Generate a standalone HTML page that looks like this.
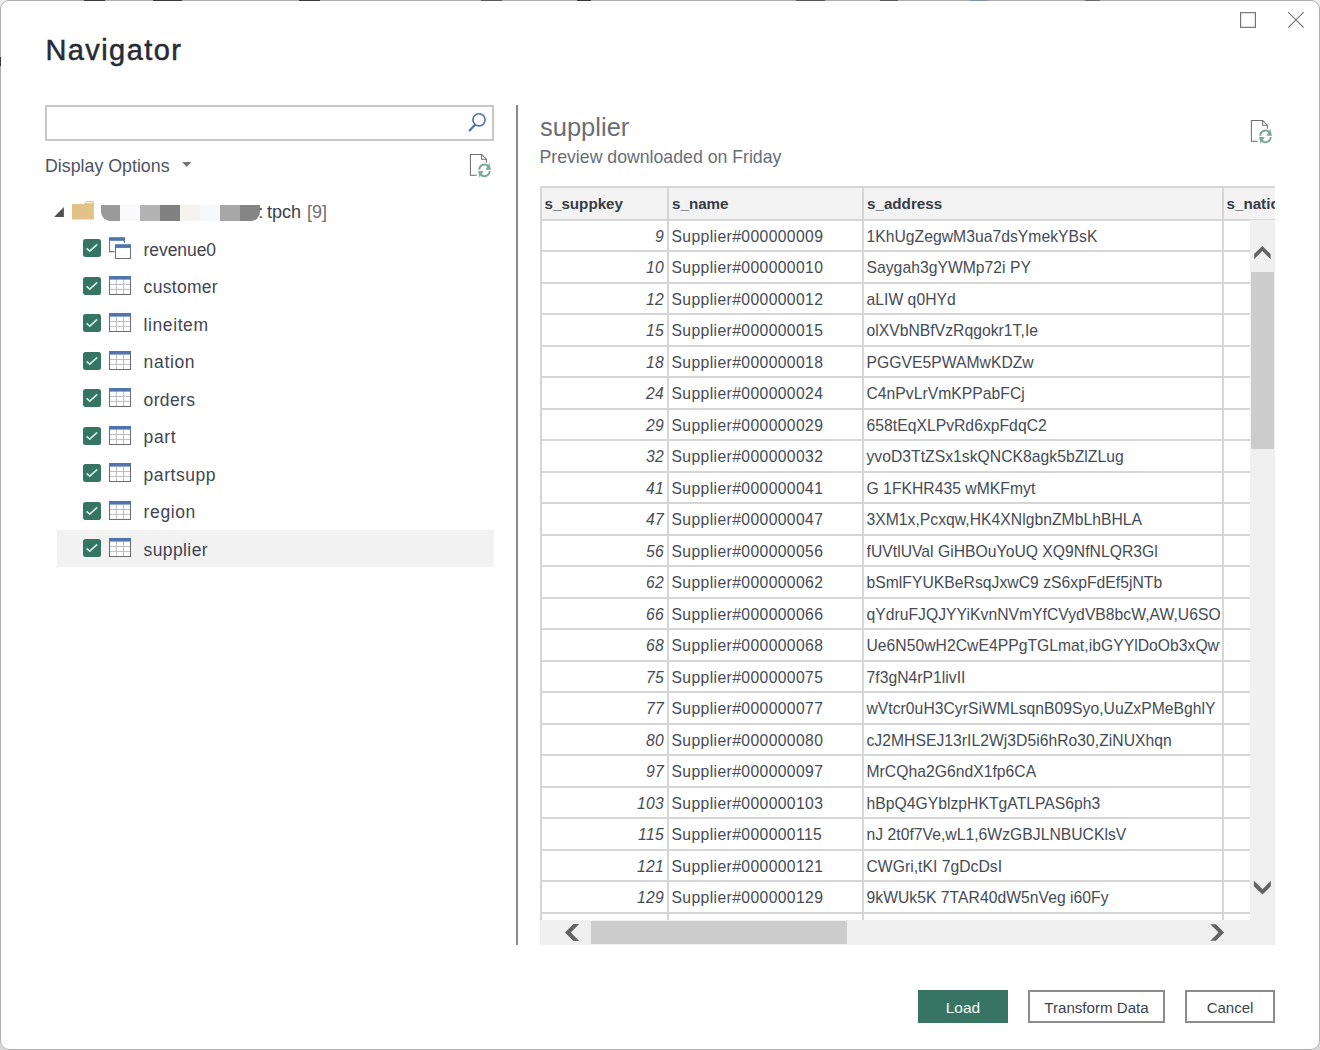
<!DOCTYPE html>
<html><head><meta charset="utf-8"><title>Navigator</title><style>
html,body{margin:0;padding:0;width:1320px;height:1050px;overflow:hidden;background:linear-gradient(#f0f0f0,#dadada);}
body{position:relative;font-family:"Liberation Sans",sans-serif;}
#dlg{position:absolute;left:0;top:0;width:1320px;height:1050px;border-radius:9px;background:#fff;overflow:hidden;}
#frame{position:absolute;left:0;top:0;width:1318px;height:1048px;border:1px solid #adadad;border-radius:9px;pointer-events:none;}
.t{position:absolute;line-height:40px;height:40px;white-space:nowrap;font-family:"Liberation Sans",sans-serif;}
.r{position:absolute;}
.s{position:absolute;left:0;top:0;overflow:visible;}
</style></head><body><div id="dlg">

<svg class="s" width="1320" height="1050" viewBox="0 0 1320 1050"><rect x="1240.6" y="12.6" width="14.8" height="14.8" fill="none" stroke="#767676" stroke-width="1.2"/><path d="M1288.2 12.2 L1303.7 27.7 M1303.7 12.2 L1288.2 27.7" stroke="#767676" stroke-width="1.2" fill="none"/></svg>
<div class="t" style="left:45.50px;top:29.65px;font-size:29px;color:#262b35;font-weight:normal;font-style:normal;-webkit-text-stroke:0.5px #262b35;letter-spacing:1.4px;">Navigator</div>
<div class="r" style="left:45px;top:105px;width:449px;height:36px;background:transparent;border:2px solid #c8c8c8;box-sizing:border-box;"></div>
<svg class="s" width="1320" height="1050" viewBox="0 0 1320 1050"><circle cx="479" cy="119.8" r="6.1" fill="none" stroke="#4f72aa" stroke-width="1.65"/><path d="M474.6 125.2 L469.6 130.4" stroke="#4f72aa" stroke-width="2.2" stroke-linecap="round"/></svg>
<div class="t" style="left:45.00px;top:145.53px;font-size:17.8px;color:#4d5460;font-weight:normal;font-style:normal;">Display Options</div>
<svg class="s" width="1320" height="1050" viewBox="0 0 1320 1050"><path d="M182.2 162 L191.2 162 L186.7 167 Z" fill="#727272"/></svg>
<svg class="s" width="1320" height="1050" viewBox="0 0 1320 1050"><g transform="translate(470.4,154.4)"><path d="M0 20.9 L0 0 L11.2 0 L16 4.8 L16 8.3" fill="none" stroke="#707070" stroke-width="1.05"/><path d="M11.2 0 L11.2 4.9 L16 4.9" fill="none" stroke="#707070" stroke-width="1.05"/><path d="M-0.5 20.9 L6.3 20.9" fill="none" stroke="#707070" stroke-width="1.05"/><path d="M8.9 15.3 A5.2 5.2 0 0 1 18.6 12.8" fill="none" stroke="#7aab98" stroke-width="2"/><path d="M15.0 15.3 L20.5 15.3 L19.0 8.7 Z" fill="#7aab98"/><path d="M19.3 16.7 A5.2 5.2 0 0 1 9.6 19.2" fill="none" stroke="#7aab98" stroke-width="2"/><path d="M13.2 16.7 L7.7 16.7 L9.2 23.3 Z" fill="#7aab98"/></g></svg>
<svg class="s" width="1320" height="1050" viewBox="0 0 1320 1050"><g transform="translate(1251.4,120.4)"><path d="M0 20.9 L0 0 L11.2 0 L16 4.8 L16 8.3" fill="none" stroke="#707070" stroke-width="1.05"/><path d="M11.2 0 L11.2 4.9 L16 4.9" fill="none" stroke="#707070" stroke-width="1.05"/><path d="M-0.5 20.9 L6.3 20.9" fill="none" stroke="#707070" stroke-width="1.05"/><path d="M8.9 15.3 A5.2 5.2 0 0 1 18.6 12.8" fill="none" stroke="#7aab98" stroke-width="2"/><path d="M15.0 15.3 L20.5 15.3 L19.0 8.7 Z" fill="#7aab98"/><path d="M19.3 16.7 A5.2 5.2 0 0 1 9.6 19.2" fill="none" stroke="#7aab98" stroke-width="2"/><path d="M13.2 16.7 L7.7 16.7 L9.2 23.3 Z" fill="#7aab98"/></g></svg>
<svg class="s" width="1320" height="1050" viewBox="0 0 1320 1050"><path d="M54.1 216.9 L63.9 207.1 L63.9 216.9 Z" fill="#505050"/><path d="M72 204 L72 219.6 L93.9 219.6 L93.9 201.2 L86.4 201.2 L84.1 204 Z" fill="#e2c286"/><path d="M84.6 203.8 L86.6 201.7 L93.4 201.7 L93.4 203.8 Z" fill="#fbf3df" stroke="#e2c286" stroke-width="0.9"/></svg>
<div class="t" style="left:258.30px;top:191.96px;font-size:18px;color:#3a3f48;font-weight:normal;font-style:normal;">:</div>
<div class="r" style="left:100.5px;top:205px;width:19.5px;height:16px;background:#9a9a9a;border-radius:0 0 0 9px;"></div>
<div class="r" style="left:120px;top:205px;width:20px;height:16px;background:#f8fafb;"></div>
<div class="r" style="left:140px;top:205px;width:20px;height:16px;background:#b3b3b3;"></div>
<div class="r" style="left:160px;top:205px;width:20px;height:16px;background:#808080;"></div>
<div class="r" style="left:180px;top:205px;width:20px;height:16px;background:#f6f3ee;"></div>
<div class="r" style="left:200px;top:205px;width:20px;height:16px;background:#f5f9fb;"></div>
<div class="r" style="left:220px;top:205px;width:20px;height:16px;background:#a7a7a7;"></div>
<div class="r" style="left:240px;top:205px;width:19.8px;height:16px;background:#858585;border-radius:0 0 9px 0;"></div>
<div class="t" style="left:267.00px;top:191.96px;font-size:18px;color:#3a3f48;font-weight:normal;font-style:normal;">tpch</div>
<div class="t" style="left:307.00px;top:191.96px;font-size:18px;color:#707070;font-weight:normal;font-style:normal;">[9]</div>
<div class="r" style="left:57px;top:530px;width:437px;height:37px;background:#f2f2f2;"></div>
<div class="r" style="left:83px;top:239px;width:18px;height:18px;background:#377563;border-radius:2.5px;"></div>
<svg class="s" width="1320" height="1050" viewBox="0 0 1320 1050"><path d="M86.6 248.4 L89.8 251.2 L97.2 244.3" fill="none" stroke="#cdeee2" stroke-width="1.6"/><path d="M109.5 240.5 V251.6 H114.5 M124.5 240 V243" fill="none" stroke="#707070" stroke-width="1.05"/><rect x="109" y="237.2" width="16" height="3.6" fill="#4f74ae"/><rect x="115.5" y="247" width="15" height="11.5" fill="#fff" stroke="#707070" stroke-width="1.05"/><rect x="115" y="244.2" width="16" height="3.6" fill="#4f74ae"/></svg>
<div class="t" style="left:143.60px;top:229.83px;font-size:17.5px;color:#3f4551;font-weight:normal;font-style:normal;letter-spacing:-0.07px;">revenue0</div>
<div class="r" style="left:83px;top:277px;width:18px;height:18px;background:#377563;border-radius:2.5px;"></div>
<svg class="s" width="1320" height="1050" viewBox="0 0 1320 1050"><path d="M86.6 286.4 L89.8 289.2 L97.2 282.3" fill="none" stroke="#cdeee2" stroke-width="1.6"/><g transform="translate(0,276)"><rect x="109.5" y="0.5" width="21" height="18" fill="#fff" stroke="#6e6e6e" stroke-width="1.05"/><path d="M116.4 3.6 V18 M123.5 3.6 V18 M110 8.5 H130 M110 13.4 H130" stroke="#bdbdbd" stroke-width="1"/><rect x="109" y="0" width="22" height="3.6" fill="#4f74ae"/></g></svg>
<div class="t" style="left:143.60px;top:267.33px;font-size:17.5px;color:#3f4551;font-weight:normal;font-style:normal;letter-spacing:0.3px;">customer</div>
<div class="r" style="left:83px;top:314px;width:18px;height:18px;background:#377563;border-radius:2.5px;"></div>
<svg class="s" width="1320" height="1050" viewBox="0 0 1320 1050"><path d="M86.6 323.4 L89.8 326.2 L97.2 319.3" fill="none" stroke="#cdeee2" stroke-width="1.6"/><g transform="translate(0,313)"><rect x="109.5" y="0.5" width="21" height="18" fill="#fff" stroke="#6e6e6e" stroke-width="1.05"/><path d="M116.4 3.6 V18 M123.5 3.6 V18 M110 8.5 H130 M110 13.4 H130" stroke="#bdbdbd" stroke-width="1"/><rect x="109" y="0" width="22" height="3.6" fill="#4f74ae"/></g></svg>
<div class="t" style="left:143.60px;top:304.83px;font-size:17.5px;color:#3f4551;font-weight:normal;font-style:normal;letter-spacing:0.586px;">lineitem</div>
<div class="r" style="left:83px;top:352px;width:18px;height:18px;background:#377563;border-radius:2.5px;"></div>
<svg class="s" width="1320" height="1050" viewBox="0 0 1320 1050"><path d="M86.6 361.4 L89.8 364.2 L97.2 357.3" fill="none" stroke="#cdeee2" stroke-width="1.6"/><g transform="translate(0,351)"><rect x="109.5" y="0.5" width="21" height="18" fill="#fff" stroke="#6e6e6e" stroke-width="1.05"/><path d="M116.4 3.6 V18 M123.5 3.6 V18 M110 8.5 H130 M110 13.4 H130" stroke="#bdbdbd" stroke-width="1"/><rect x="109" y="0" width="22" height="3.6" fill="#4f74ae"/></g></svg>
<div class="t" style="left:143.60px;top:342.33px;font-size:17.5px;color:#3f4551;font-weight:normal;font-style:normal;letter-spacing:0.66px;">nation</div>
<div class="r" style="left:83px;top:389px;width:18px;height:18px;background:#377563;border-radius:2.5px;"></div>
<svg class="s" width="1320" height="1050" viewBox="0 0 1320 1050"><path d="M86.6 398.4 L89.8 401.2 L97.2 394.3" fill="none" stroke="#cdeee2" stroke-width="1.6"/><g transform="translate(0,388)"><rect x="109.5" y="0.5" width="21" height="18" fill="#fff" stroke="#6e6e6e" stroke-width="1.05"/><path d="M116.4 3.6 V18 M123.5 3.6 V18 M110 8.5 H130 M110 13.4 H130" stroke="#bdbdbd" stroke-width="1"/><rect x="109" y="0" width="22" height="3.6" fill="#4f74ae"/></g></svg>
<div class="t" style="left:143.60px;top:379.83px;font-size:17.5px;color:#3f4551;font-weight:normal;font-style:normal;letter-spacing:0.36px;">orders</div>
<div class="r" style="left:83px;top:427px;width:18px;height:18px;background:#377563;border-radius:2.5px;"></div>
<svg class="s" width="1320" height="1050" viewBox="0 0 1320 1050"><path d="M86.6 436.4 L89.8 439.2 L97.2 432.3" fill="none" stroke="#cdeee2" stroke-width="1.6"/><g transform="translate(0,426)"><rect x="109.5" y="0.5" width="21" height="18" fill="#fff" stroke="#6e6e6e" stroke-width="1.05"/><path d="M116.4 3.6 V18 M123.5 3.6 V18 M110 8.5 H130 M110 13.4 H130" stroke="#bdbdbd" stroke-width="1"/><rect x="109" y="0" width="22" height="3.6" fill="#4f74ae"/></g></svg>
<div class="t" style="left:143.60px;top:417.33px;font-size:17.5px;color:#3f4551;font-weight:normal;font-style:normal;letter-spacing:0.6px;">part</div>
<div class="r" style="left:83px;top:464px;width:18px;height:18px;background:#377563;border-radius:2.5px;"></div>
<svg class="s" width="1320" height="1050" viewBox="0 0 1320 1050"><path d="M86.6 473.4 L89.8 476.2 L97.2 469.3" fill="none" stroke="#cdeee2" stroke-width="1.6"/><g transform="translate(0,463)"><rect x="109.5" y="0.5" width="21" height="18" fill="#fff" stroke="#6e6e6e" stroke-width="1.05"/><path d="M116.4 3.6 V18 M123.5 3.6 V18 M110 8.5 H130 M110 13.4 H130" stroke="#bdbdbd" stroke-width="1"/><rect x="109" y="0" width="22" height="3.6" fill="#4f74ae"/></g></svg>
<div class="t" style="left:143.60px;top:454.83px;font-size:17.5px;color:#3f4551;font-weight:normal;font-style:normal;letter-spacing:0.543px;">partsupp</div>
<div class="r" style="left:83px;top:502px;width:18px;height:18px;background:#377563;border-radius:2.5px;"></div>
<svg class="s" width="1320" height="1050" viewBox="0 0 1320 1050"><path d="M86.6 511.4 L89.8 514.2 L97.2 507.3" fill="none" stroke="#cdeee2" stroke-width="1.6"/><g transform="translate(0,501)"><rect x="109.5" y="0.5" width="21" height="18" fill="#fff" stroke="#6e6e6e" stroke-width="1.05"/><path d="M116.4 3.6 V18 M123.5 3.6 V18 M110 8.5 H130 M110 13.4 H130" stroke="#bdbdbd" stroke-width="1"/><rect x="109" y="0" width="22" height="3.6" fill="#4f74ae"/></g></svg>
<div class="t" style="left:143.60px;top:492.33px;font-size:17.5px;color:#3f4551;font-weight:normal;font-style:normal;letter-spacing:0.62px;">region</div>
<div class="r" style="left:83px;top:539px;width:18px;height:18px;background:#377563;border-radius:2.5px;"></div>
<svg class="s" width="1320" height="1050" viewBox="0 0 1320 1050"><path d="M86.6 548.4 L89.8 551.2 L97.2 544.3" fill="none" stroke="#cdeee2" stroke-width="1.6"/><g transform="translate(0,538)"><rect x="109.5" y="0.5" width="21" height="18" fill="#fff" stroke="#6e6e6e" stroke-width="1.05"/><path d="M116.4 3.6 V18 M123.5 3.6 V18 M110 8.5 H130 M110 13.4 H130" stroke="#bdbdbd" stroke-width="1"/><rect x="109" y="0" width="22" height="3.6" fill="#4f74ae"/></g></svg>
<div class="t" style="left:143.60px;top:529.83px;font-size:17.5px;color:#3f4551;font-weight:normal;font-style:normal;letter-spacing:0.386px;">supplier</div>
<div class="r" style="left:516px;top:105px;width:2px;height:840px;background:#8a8a8a;"></div>
<div class="t" style="left:540.00px;top:107.06px;font-size:25.5px;color:#6a6d74;font-weight:normal;font-style:normal;">supplier</div>
<div class="t" style="left:539.50px;top:136.96px;font-size:17.7px;color:#686e78;font-weight:normal;font-style:normal;">Preview downloaded on Friday</div>
<div class="r" style="left:540px;top:186px;width:735px;height:734px;overflow:hidden;">
<div class="r" style="left:0px;top:0px;width:735px;height:33px;background:#f3f3f3;"></div>
<div class="r" style="left:0px;top:0px;width:735px;height:2px;background:#d6d6d6;"></div>
<div class="r" style="left:0px;top:0px;width:2px;height:734px;background:#d6d6d6;"></div>
<div class="r" style="left:127px;top:0px;width:2px;height:734px;background:#d6d6d6;"></div>
<div class="r" style="left:322px;top:0px;width:2px;height:734px;background:#d6d6d6;"></div>
<div class="r" style="left:682px;top:0px;width:2px;height:734px;background:#d6d6d6;"></div>
<div class="r" style="left:0px;top:33px;width:735px;height:2px;background:#d6d6d6;"></div>
<div class="r" style="left:0px;top:64px;width:735px;height:2px;background:#d6d6d6;"></div>
<div class="r" style="left:0px;top:96px;width:735px;height:2px;background:#d6d6d6;"></div>
<div class="r" style="left:0px;top:127px;width:735px;height:2px;background:#d6d6d6;"></div>
<div class="r" style="left:0px;top:159px;width:735px;height:2px;background:#d6d6d6;"></div>
<div class="r" style="left:0px;top:190px;width:735px;height:2px;background:#d6d6d6;"></div>
<div class="r" style="left:0px;top:222px;width:735px;height:2px;background:#d6d6d6;"></div>
<div class="r" style="left:0px;top:253px;width:735px;height:2px;background:#d6d6d6;"></div>
<div class="r" style="left:0px;top:285px;width:735px;height:2px;background:#d6d6d6;"></div>
<div class="r" style="left:0px;top:316px;width:735px;height:2px;background:#d6d6d6;"></div>
<div class="r" style="left:0px;top:348px;width:735px;height:2px;background:#d6d6d6;"></div>
<div class="r" style="left:0px;top:379px;width:735px;height:2px;background:#d6d6d6;"></div>
<div class="r" style="left:0px;top:411px;width:735px;height:2px;background:#d6d6d6;"></div>
<div class="r" style="left:0px;top:442px;width:735px;height:2px;background:#d6d6d6;"></div>
<div class="r" style="left:0px;top:474px;width:735px;height:2px;background:#d6d6d6;"></div>
<div class="r" style="left:0px;top:505px;width:735px;height:2px;background:#d6d6d6;"></div>
<div class="r" style="left:0px;top:537px;width:735px;height:2px;background:#d6d6d6;"></div>
<div class="r" style="left:0px;top:568px;width:735px;height:2px;background:#d6d6d6;"></div>
<div class="r" style="left:0px;top:600px;width:735px;height:2px;background:#d6d6d6;"></div>
<div class="r" style="left:0px;top:631px;width:735px;height:2px;background:#d6d6d6;"></div>
<div class="r" style="left:0px;top:663px;width:735px;height:2px;background:#d6d6d6;"></div>
<div class="r" style="left:0px;top:694px;width:735px;height:2px;background:#d6d6d6;"></div>
<div class="r" style="left:0px;top:726px;width:735px;height:2px;background:#d6d6d6;"></div>
<div class="t" style="left:4.50px;top:-2.47px;font-size:15.2px;color:#363c46;font-weight:bold;font-style:normal;">s_suppkey</div>
<div class="t" style="left:132.00px;top:-2.47px;font-size:15.2px;color:#363c46;font-weight:bold;font-style:normal;">s_name</div>
<div class="t" style="left:327.00px;top:-2.47px;font-size:15.2px;color:#363c46;font-weight:bold;font-style:normal;">s_address</div>
<div class="t" style="left:686.50px;top:-2.47px;font-size:15.2px;color:#363c46;font-weight:bold;font-style:normal;">s_nation</div>
<div class="t" style="left:0px;width:124px;text-align:right;top:30.76px;font-size:15.7px;color:#454b55;font-style:italic;letter-spacing:0.3px">9</div>
<div class="t" style="left:131.50px;top:30.76px;font-size:15.7px;color:#454b55;font-weight:normal;font-style:normal;letter-spacing:0.39px;">Supplier#000000009</div>
<div class="r" style="left:324px;top:0;width:355.5999999999999px;height:734px;overflow:hidden">
<div class="t" style="left:2.5px;top:30.76px;font-size:15.7px;color:#454b55;letter-spacing:0.03px">1KhUgZegwM3ua7dsYmekYBsK</div>
</div>
<div class="t" style="left:0px;width:124px;text-align:right;top:62.26px;font-size:15.7px;color:#454b55;font-style:italic;letter-spacing:0.3px">10</div>
<div class="t" style="left:131.50px;top:62.26px;font-size:15.7px;color:#454b55;font-weight:normal;font-style:normal;letter-spacing:0.39px;">Supplier#000000010</div>
<div class="r" style="left:324px;top:0;width:355.5999999999999px;height:734px;overflow:hidden">
<div class="t" style="left:2.5px;top:62.26px;font-size:15.7px;color:#454b55;letter-spacing:0.03px">Saygah3gYWMp72i PY</div>
</div>
<div class="t" style="left:0px;width:124px;text-align:right;top:93.76px;font-size:15.7px;color:#454b55;font-style:italic;letter-spacing:0.3px">12</div>
<div class="t" style="left:131.50px;top:93.76px;font-size:15.7px;color:#454b55;font-weight:normal;font-style:normal;letter-spacing:0.39px;">Supplier#000000012</div>
<div class="r" style="left:324px;top:0;width:355.5999999999999px;height:734px;overflow:hidden">
<div class="t" style="left:2.5px;top:93.76px;font-size:15.7px;color:#454b55;letter-spacing:0.03px">aLIW q0HYd</div>
</div>
<div class="t" style="left:0px;width:124px;text-align:right;top:125.26px;font-size:15.7px;color:#454b55;font-style:italic;letter-spacing:0.3px">15</div>
<div class="t" style="left:131.50px;top:125.26px;font-size:15.7px;color:#454b55;font-weight:normal;font-style:normal;letter-spacing:0.39px;">Supplier#000000015</div>
<div class="r" style="left:324px;top:0;width:355.5999999999999px;height:734px;overflow:hidden">
<div class="t" style="left:2.5px;top:125.26px;font-size:15.7px;color:#454b55;letter-spacing:0.03px">olXVbNBfVzRqgokr1T,Ie</div>
</div>
<div class="t" style="left:0px;width:124px;text-align:right;top:156.76px;font-size:15.7px;color:#454b55;font-style:italic;letter-spacing:0.3px">18</div>
<div class="t" style="left:131.50px;top:156.76px;font-size:15.7px;color:#454b55;font-weight:normal;font-style:normal;letter-spacing:0.39px;">Supplier#000000018</div>
<div class="r" style="left:324px;top:0;width:355.5999999999999px;height:734px;overflow:hidden">
<div class="t" style="left:2.5px;top:156.76px;font-size:15.7px;color:#454b55;letter-spacing:0.03px">PGGVE5PWAMwKDZw</div>
</div>
<div class="t" style="left:0px;width:124px;text-align:right;top:188.26px;font-size:15.7px;color:#454b55;font-style:italic;letter-spacing:0.3px">24</div>
<div class="t" style="left:131.50px;top:188.26px;font-size:15.7px;color:#454b55;font-weight:normal;font-style:normal;letter-spacing:0.39px;">Supplier#000000024</div>
<div class="r" style="left:324px;top:0;width:355.5999999999999px;height:734px;overflow:hidden">
<div class="t" style="left:2.5px;top:188.26px;font-size:15.7px;color:#454b55;letter-spacing:0.03px">C4nPvLrVmKPPabFCj</div>
</div>
<div class="t" style="left:0px;width:124px;text-align:right;top:219.76px;font-size:15.7px;color:#454b55;font-style:italic;letter-spacing:0.3px">29</div>
<div class="t" style="left:131.50px;top:219.76px;font-size:15.7px;color:#454b55;font-weight:normal;font-style:normal;letter-spacing:0.39px;">Supplier#000000029</div>
<div class="r" style="left:324px;top:0;width:355.5999999999999px;height:734px;overflow:hidden">
<div class="t" style="left:2.5px;top:219.76px;font-size:15.7px;color:#454b55;letter-spacing:0.03px">658tEqXLPvRd6xpFdqC2</div>
</div>
<div class="t" style="left:0px;width:124px;text-align:right;top:251.26px;font-size:15.7px;color:#454b55;font-style:italic;letter-spacing:0.3px">32</div>
<div class="t" style="left:131.50px;top:251.26px;font-size:15.7px;color:#454b55;font-weight:normal;font-style:normal;letter-spacing:0.39px;">Supplier#000000032</div>
<div class="r" style="left:324px;top:0;width:355.5999999999999px;height:734px;overflow:hidden">
<div class="t" style="left:2.5px;top:251.26px;font-size:15.7px;color:#454b55;letter-spacing:0.03px">yvoD3TtZSx1skQNCK8agk5bZlZLug</div>
</div>
<div class="t" style="left:0px;width:124px;text-align:right;top:282.76px;font-size:15.7px;color:#454b55;font-style:italic;letter-spacing:0.3px">41</div>
<div class="t" style="left:131.50px;top:282.76px;font-size:15.7px;color:#454b55;font-weight:normal;font-style:normal;letter-spacing:0.39px;">Supplier#000000041</div>
<div class="r" style="left:324px;top:0;width:355.5999999999999px;height:734px;overflow:hidden">
<div class="t" style="left:2.5px;top:282.76px;font-size:15.7px;color:#454b55;letter-spacing:0.03px">G 1FKHR435 wMKFmyt</div>
</div>
<div class="t" style="left:0px;width:124px;text-align:right;top:314.26px;font-size:15.7px;color:#454b55;font-style:italic;letter-spacing:0.3px">47</div>
<div class="t" style="left:131.50px;top:314.26px;font-size:15.7px;color:#454b55;font-weight:normal;font-style:normal;letter-spacing:0.39px;">Supplier#000000047</div>
<div class="r" style="left:324px;top:0;width:355.5999999999999px;height:734px;overflow:hidden">
<div class="t" style="left:2.5px;top:314.26px;font-size:15.7px;color:#454b55;letter-spacing:0.03px">3XM1x,Pcxqw,HK4XNlgbnZMbLhBHLA</div>
</div>
<div class="t" style="left:0px;width:124px;text-align:right;top:345.76px;font-size:15.7px;color:#454b55;font-style:italic;letter-spacing:0.3px">56</div>
<div class="t" style="left:131.50px;top:345.76px;font-size:15.7px;color:#454b55;font-weight:normal;font-style:normal;letter-spacing:0.39px;">Supplier#000000056</div>
<div class="r" style="left:324px;top:0;width:355.5999999999999px;height:734px;overflow:hidden">
<div class="t" style="left:2.5px;top:345.76px;font-size:15.7px;color:#454b55;letter-spacing:0.03px">fUVtlUVal GiHBOuYoUQ XQ9NfNLQR3Gl</div>
</div>
<div class="t" style="left:0px;width:124px;text-align:right;top:377.26px;font-size:15.7px;color:#454b55;font-style:italic;letter-spacing:0.3px">62</div>
<div class="t" style="left:131.50px;top:377.26px;font-size:15.7px;color:#454b55;font-weight:normal;font-style:normal;letter-spacing:0.39px;">Supplier#000000062</div>
<div class="r" style="left:324px;top:0;width:355.5999999999999px;height:734px;overflow:hidden">
<div class="t" style="left:2.5px;top:377.26px;font-size:15.7px;color:#454b55;letter-spacing:0.03px">bSmlFYUKBeRsqJxwC9 zS6xpFdEf5jNTb</div>
</div>
<div class="t" style="left:0px;width:124px;text-align:right;top:408.76px;font-size:15.7px;color:#454b55;font-style:italic;letter-spacing:0.3px">66</div>
<div class="t" style="left:131.50px;top:408.76px;font-size:15.7px;color:#454b55;font-weight:normal;font-style:normal;letter-spacing:0.39px;">Supplier#000000066</div>
<div class="r" style="left:324px;top:0;width:355.5999999999999px;height:734px;overflow:hidden">
<div class="t" style="left:2.5px;top:408.76px;font-size:15.7px;color:#454b55;letter-spacing:0.03px">qYdruFJQJYYiKvnNVmYfCVydVB8bcW,AW,U6SOYVq</div>
</div>
<div class="t" style="left:0px;width:124px;text-align:right;top:440.26px;font-size:15.7px;color:#454b55;font-style:italic;letter-spacing:0.3px">68</div>
<div class="t" style="left:131.50px;top:440.26px;font-size:15.7px;color:#454b55;font-weight:normal;font-style:normal;letter-spacing:0.39px;">Supplier#000000068</div>
<div class="r" style="left:324px;top:0;width:355.5999999999999px;height:734px;overflow:hidden">
<div class="t" style="left:2.5px;top:440.26px;font-size:15.7px;color:#454b55;letter-spacing:0.03px">Ue6N50wH2CwE4PPgTGLmat,ibGYYlDoOb3xQwtgb</div>
</div>
<div class="t" style="left:0px;width:124px;text-align:right;top:471.76px;font-size:15.7px;color:#454b55;font-style:italic;letter-spacing:0.3px">75</div>
<div class="t" style="left:131.50px;top:471.76px;font-size:15.7px;color:#454b55;font-weight:normal;font-style:normal;letter-spacing:0.39px;">Supplier#000000075</div>
<div class="r" style="left:324px;top:0;width:355.5999999999999px;height:734px;overflow:hidden">
<div class="t" style="left:2.5px;top:471.76px;font-size:15.7px;color:#454b55;letter-spacing:0.03px">7f3gN4rP1livII</div>
</div>
<div class="t" style="left:0px;width:124px;text-align:right;top:503.26px;font-size:15.7px;color:#454b55;font-style:italic;letter-spacing:0.3px">77</div>
<div class="t" style="left:131.50px;top:503.26px;font-size:15.7px;color:#454b55;font-weight:normal;font-style:normal;letter-spacing:0.39px;">Supplier#000000077</div>
<div class="r" style="left:324px;top:0;width:355.5999999999999px;height:734px;overflow:hidden">
<div class="t" style="left:2.5px;top:503.26px;font-size:15.7px;color:#454b55;letter-spacing:0.03px">wVtcr0uH3CyrSiWMLsqnB09Syo,UuZxPMeBghlY</div>
</div>
<div class="t" style="left:0px;width:124px;text-align:right;top:534.76px;font-size:15.7px;color:#454b55;font-style:italic;letter-spacing:0.3px">80</div>
<div class="t" style="left:131.50px;top:534.76px;font-size:15.7px;color:#454b55;font-weight:normal;font-style:normal;letter-spacing:0.39px;">Supplier#000000080</div>
<div class="r" style="left:324px;top:0;width:355.5999999999999px;height:734px;overflow:hidden">
<div class="t" style="left:2.5px;top:534.76px;font-size:15.7px;color:#454b55;letter-spacing:0.03px">cJ2MHSEJ13rIL2Wj3D5i6hRo30,ZiNUXhqn</div>
</div>
<div class="t" style="left:0px;width:124px;text-align:right;top:566.26px;font-size:15.7px;color:#454b55;font-style:italic;letter-spacing:0.3px">97</div>
<div class="t" style="left:131.50px;top:566.26px;font-size:15.7px;color:#454b55;font-weight:normal;font-style:normal;letter-spacing:0.39px;">Supplier#000000097</div>
<div class="r" style="left:324px;top:0;width:355.5999999999999px;height:734px;overflow:hidden">
<div class="t" style="left:2.5px;top:566.26px;font-size:15.7px;color:#454b55;letter-spacing:0.03px">MrCQha2G6ndX1fp6CA</div>
</div>
<div class="t" style="left:0px;width:124px;text-align:right;top:597.76px;font-size:15.7px;color:#454b55;font-style:italic;letter-spacing:0.3px">103</div>
<div class="t" style="left:131.50px;top:597.76px;font-size:15.7px;color:#454b55;font-weight:normal;font-style:normal;letter-spacing:0.39px;">Supplier#000000103</div>
<div class="r" style="left:324px;top:0;width:355.5999999999999px;height:734px;overflow:hidden">
<div class="t" style="left:2.5px;top:597.76px;font-size:15.7px;color:#454b55;letter-spacing:0.03px">hBpQ4GYblzpHKTgATLPAS6ph3</div>
</div>
<div class="t" style="left:0px;width:124px;text-align:right;top:629.26px;font-size:15.7px;color:#454b55;font-style:italic;letter-spacing:0.3px">115</div>
<div class="t" style="left:131.50px;top:629.26px;font-size:15.7px;color:#454b55;font-weight:normal;font-style:normal;letter-spacing:0.39px;">Supplier#000000115</div>
<div class="r" style="left:324px;top:0;width:355.5999999999999px;height:734px;overflow:hidden">
<div class="t" style="left:2.5px;top:629.26px;font-size:15.7px;color:#454b55;letter-spacing:0.03px">nJ 2t0f7Ve,wL1,6WzGBJLNBUCKlsV</div>
</div>
<div class="t" style="left:0px;width:124px;text-align:right;top:660.76px;font-size:15.7px;color:#454b55;font-style:italic;letter-spacing:0.3px">121</div>
<div class="t" style="left:131.50px;top:660.76px;font-size:15.7px;color:#454b55;font-weight:normal;font-style:normal;letter-spacing:0.39px;">Supplier#000000121</div>
<div class="r" style="left:324px;top:0;width:355.5999999999999px;height:734px;overflow:hidden">
<div class="t" style="left:2.5px;top:660.76px;font-size:15.7px;color:#454b55;letter-spacing:0.03px">CWGri,tKI 7gDcDsI</div>
</div>
<div class="t" style="left:0px;width:124px;text-align:right;top:692.26px;font-size:15.7px;color:#454b55;font-style:italic;letter-spacing:0.3px">129</div>
<div class="t" style="left:131.50px;top:692.26px;font-size:15.7px;color:#454b55;font-weight:normal;font-style:normal;letter-spacing:0.39px;">Supplier#000000129</div>
<div class="r" style="left:324px;top:0;width:355.5999999999999px;height:734px;overflow:hidden">
<div class="t" style="left:2.5px;top:692.26px;font-size:15.7px;color:#454b55;letter-spacing:0.03px">9kWUk5K 7TAR40dW5nVeg i60Fy</div>
</div>
<div class="t" style="left:0px;width:124px;text-align:right;top:723.76px;font-size:15.7px;color:#454b55;font-style:italic;letter-spacing:0.3px">130</div>
<div class="t" style="left:131.50px;top:723.76px;font-size:15.7px;color:#454b55;font-weight:normal;font-style:normal;letter-spacing:0.39px;">Supplier#000000130</div>
<div class="r" style="left:324px;top:0;width:355.5999999999999px;height:734px;overflow:hidden">
<div class="t" style="left:2.5px;top:723.76px;font-size:15.7px;color:#454b55;letter-spacing:0.03px">bCt7Rh8vJ0P2wQ</div>
</div>
</div>
<div class="r" style="left:1250px;top:220px;width:25px;height:725px;background:#f0f0f0;"></div>
<div class="r" style="left:1251px;top:272px;width:23px;height:177px;background:#cdcdcd;"></div>
<div class="r" style="left:540px;top:920px;width:735px;height:25px;background:#f0f0f0;"></div>
<div class="r" style="left:591px;top:921px;width:256px;height:23px;background:#cdcdcd;"></div>
<svg class="s" width="1320" height="1050" viewBox="0 0 1320 1050"><path d="M1254.1 254 L1262.3 245.9 L1270.6 254 L1270.6 259.3 L1262.3 251.1 L1254.1 259.3 Z" fill="#636363"/><path d="M1253.9 880.8 L1262.5 889.3 L1270.8 880.8 L1270.8 886.3 L1262.5 894.6 L1253.9 886.3 Z" fill="#636363"/><path d="M579.1 924.1 L573.5 924.1 L565 932.5 L573.5 940.9 L579.1 940.9 L570.9 932.5 Z" fill="#636363"/><path d="M1210.3 924.2 L1216 924.2 L1224 932.5 L1216 940.8 L1210.3 940.8 L1218.6 932.5 Z" fill="#636363"/></svg>
<div class="r" style="left:918px;top:990px;width:90px;height:33px;background:#387463;"></div>
<div class="t" style="left:918px;top:991px;width:90px;height:33px;line-height:33px;text-align:center;font-size:15.5px;color:#f2fbf6">Load</div>
<div class="r" style="left:1028px;top:990px;width:137px;height:33px;background:#fff;border:2px solid #8c8c8c;box-sizing:border-box;"></div>
<div class="t" style="left:1028px;top:991px;width:137px;height:33px;line-height:33px;text-align:center;font-size:15.1px;color:#3c424c">Transform Data</div>
<div class="r" style="left:1185px;top:990px;width:90px;height:33px;background:#fff;border:2px solid #8c8c8c;box-sizing:border-box;"></div>
<div class="t" style="left:1185px;top:991px;width:90px;height:33px;line-height:33px;text-align:center;font-size:15px;color:#3c424c">Cancel</div>
</div><div id="frame"></div>
<div class="r" style="left:84px;top:0px;width:21px;height:1px;background:#3a3a3a;"></div>
<div class="r" style="left:153px;top:0px;width:29px;height:1px;background:#3a3a3a;"></div>
<div class="r" style="left:299px;top:0px;width:21px;height:1px;background:#3a3a3a;"></div>
<div class="r" style="left:481px;top:0px;width:21px;height:1px;background:#5a5a5a;"></div>
<div class="r" style="left:577px;top:0px;width:14px;height:1px;background:#3a3a3a;"></div>
<div class="r" style="left:796px;top:0px;width:29px;height:1px;background:#555;"></div>
<div class="r" style="left:880px;top:0px;width:18px;height:1px;background:#5a5a5a;"></div>
<div class="r" style="left:970px;top:0px;width:18px;height:1px;background:#8090a0;"></div>
<div class="r" style="left:1085px;top:0px;width:15px;height:1px;background:#6a6a6a;"></div>
<div class="r" style="left:0px;top:57px;width:1px;height:9px;background:#3a3a48;"></div>
</body></html>
